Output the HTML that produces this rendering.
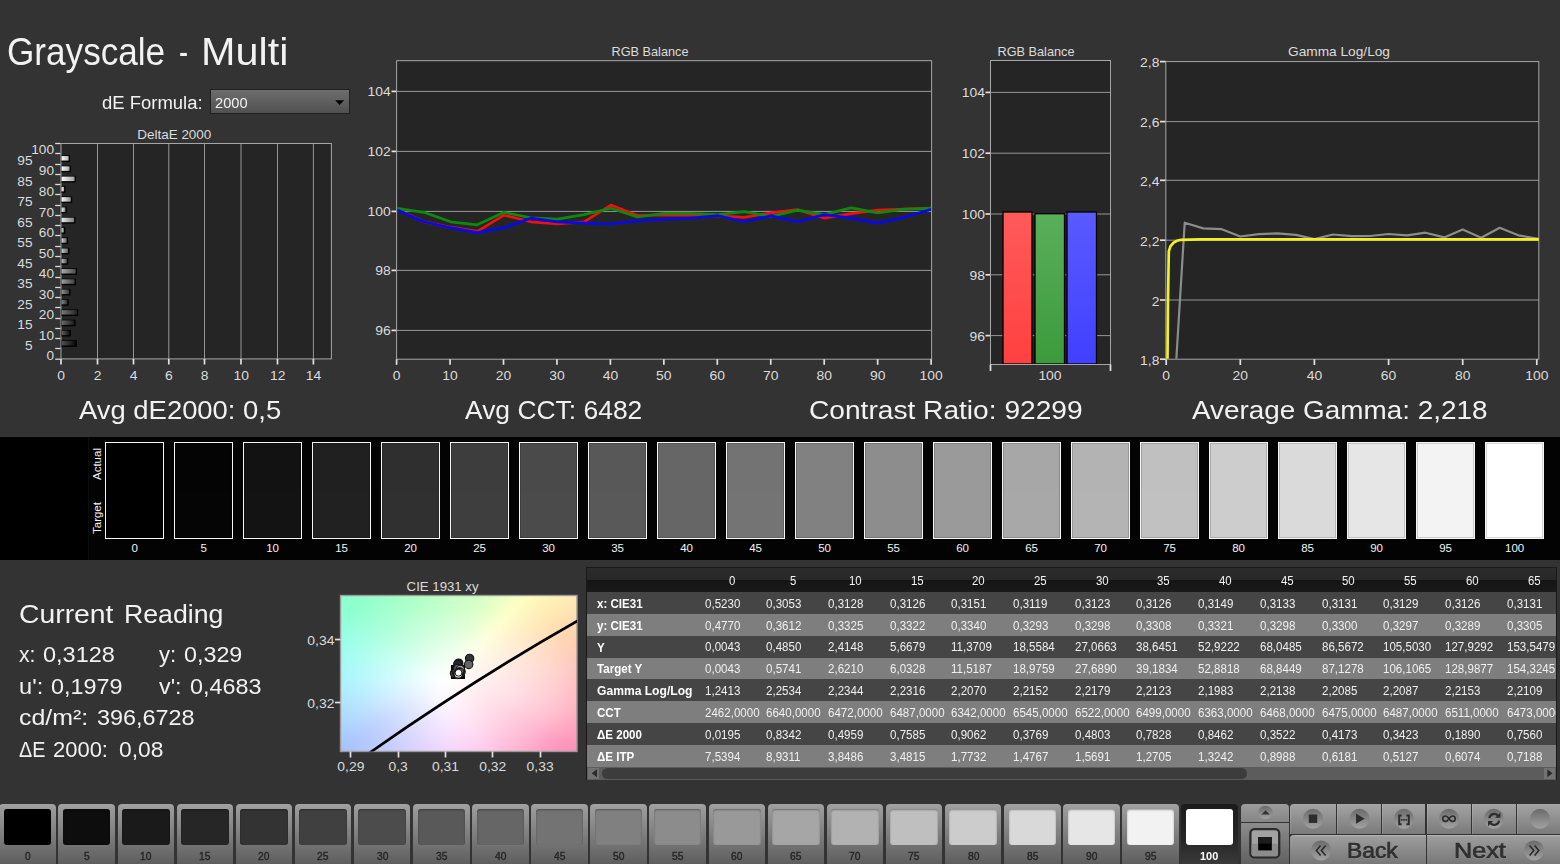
<!DOCTYPE html>
<html lang="en">
<head>
<meta charset="utf-8">
<title>Grayscale - Multi</title>
<style>
html,body{margin:0;padding:0;}
body{width:1560px;height:864px;overflow:hidden;background:#333333;position:relative;
 font-family:"Liberation Sans",sans-serif;}
.t{position:absolute;white-space:nowrap;line-height:1;transform-origin:0 0;display:block;}
.abs{position:absolute;}
svg{position:absolute;left:0;top:0;overflow:visible;}
svg text{font-family:"Liberation Sans",sans-serif;}
.row{position:absolute;left:587px;width:969px;}
.tab{position:absolute;top:804px;height:60px;width:56.5px;border-radius:4px 4px 0 0;
 background:linear-gradient(#a3a3a3 0,#9a9a9a 8%,#5e5e5e 100%);}
.tab i{position:absolute;left:4.5px;top:5px;width:47.5px;height:36px;border-radius:3px;display:block;}
.btn{position:absolute;background:linear-gradient(#9e9e9e,#6a6a6a);}
</style>
</head>
<body>

<div id="header">
<span class="t" style="left:6.90px;top:32.00px;font-size:39px;color:#f2f2f2;transform:scaleX(0.9009);">Grayscale</span> <span class="t" style="left:178.90px;top:32.00px;font-size:39px;color:#f2f2f2;transform:scaleX(0.6965);">-</span> <span class="t" style="left:201.20px;top:32.00px;font-size:39px;color:#f2f2f2;transform:scaleX(1.0609);">Multi</span>
<span class="t" style="left:102.00px;top:93.80px;font-size:18px;color:#f2f2f2;transform:scaleX(1.0261);">dE Formula:</span>
<div class="abs" style="left:210px;top:88.6px;width:137.6px;height:23px;border:1px solid #202020;background:linear-gradient(#6e6e6e,#505050);"></div>
<span class="t" style="left:214.80px;top:95.30px;font-size:15px;color:#f2f2f2;transform:scaleX(0.9769);">2000</span>
<svg width="1560" height="864"><path d="M335.2 100.2h8.900l-4.450 4.900z" fill="#000"/></svg>
</div>
<svg id="charts" width="1560" height="864" viewBox="0 0 1560 864">
<defs>
<clipPath id="cpRgb"><rect x="397" y="61" width="534.5" height="298.5"/></clipPath>
<clipPath id="cpGam"><rect x="1166" y="62" width="373" height="296.8"/></clipPath>
<clipPath id="cpCie"><rect x="340.5" y="595.5" width="236.5" height="156"/></clipPath>
<linearGradient id="gR" x1="0" y1="0" x2="0" y2="1"><stop offset="0" stop-color="#ff5a5a"/><stop offset="1" stop-color="#ff4040"/></linearGradient>
<linearGradient id="gG" x1="0" y1="0" x2="0" y2="1"><stop offset="0" stop-color="#5aaf5a"/><stop offset="1" stop-color="#3c9a3c"/></linearGradient>
<linearGradient id="gB" x1="0" y1="0" x2="0" y2="1"><stop offset="0" stop-color="#5a5aff"/><stop offset="1" stop-color="#4040ff"/></linearGradient>

<linearGradient id="gd0" x1="0" y1="0" x2="1" y2="0"><stop offset="0" stop-color="#464646"/><stop offset="1" stop-color="#000000"/></linearGradient>
<linearGradient id="gd5" x1="0" y1="0" x2="1" y2="0"><stop offset="0" stop-color="#535353"/><stop offset="1" stop-color="#090909"/></linearGradient>
<linearGradient id="gd10" x1="0" y1="0" x2="1" y2="0"><stop offset="0" stop-color="#606060"/><stop offset="1" stop-color="#131313"/></linearGradient>
<linearGradient id="gd15" x1="0" y1="0" x2="1" y2="0"><stop offset="0" stop-color="#6c6c6c"/><stop offset="1" stop-color="#1c1c1c"/></linearGradient>
<linearGradient id="gd20" x1="0" y1="0" x2="1" y2="0"><stop offset="0" stop-color="#797979"/><stop offset="1" stop-color="#262626"/></linearGradient>
<linearGradient id="gd25" x1="0" y1="0" x2="1" y2="0"><stop offset="0" stop-color="#868686"/><stop offset="1" stop-color="#303030"/></linearGradient>
<linearGradient id="gd30" x1="0" y1="0" x2="1" y2="0"><stop offset="0" stop-color="#929292"/><stop offset="1" stop-color="#393939"/></linearGradient>
<linearGradient id="gd35" x1="0" y1="0" x2="1" y2="0"><stop offset="0" stop-color="#9f9f9f"/><stop offset="1" stop-color="#424242"/></linearGradient>
<linearGradient id="gd40" x1="0" y1="0" x2="1" y2="0"><stop offset="0" stop-color="#acacac"/><stop offset="1" stop-color="#4c4c4c"/></linearGradient>
<linearGradient id="gd45" x1="0" y1="0" x2="1" y2="0"><stop offset="0" stop-color="#b9b9b9"/><stop offset="1" stop-color="#565656"/></linearGradient>
<linearGradient id="gd50" x1="0" y1="0" x2="1" y2="0"><stop offset="0" stop-color="#c6c6c6"/><stop offset="1" stop-color="#606060"/></linearGradient>
<linearGradient id="gd55" x1="0" y1="0" x2="1" y2="0"><stop offset="0" stop-color="#d2d2d2"/><stop offset="1" stop-color="#696969"/></linearGradient>
<linearGradient id="gd60" x1="0" y1="0" x2="1" y2="0"><stop offset="0" stop-color="#dfdfdf"/><stop offset="1" stop-color="#727272"/></linearGradient>
<linearGradient id="gd65" x1="0" y1="0" x2="1" y2="0"><stop offset="0" stop-color="#ececec"/><stop offset="1" stop-color="#7c7c7c"/></linearGradient>
<linearGradient id="gd70" x1="0" y1="0" x2="1" y2="0"><stop offset="0" stop-color="#f8f8f8"/><stop offset="1" stop-color="#858585"/></linearGradient>
<linearGradient id="gd75" x1="0" y1="0" x2="1" y2="0"><stop offset="0" stop-color="#ffffff"/><stop offset="1" stop-color="#8f8f8f"/></linearGradient>
<linearGradient id="gd80" x1="0" y1="0" x2="1" y2="0"><stop offset="0" stop-color="#ffffff"/><stop offset="1" stop-color="#999999"/></linearGradient>
<linearGradient id="gd85" x1="0" y1="0" x2="1" y2="0"><stop offset="0" stop-color="#ffffff"/><stop offset="1" stop-color="#a2a2a2"/></linearGradient>
<linearGradient id="gd90" x1="0" y1="0" x2="1" y2="0"><stop offset="0" stop-color="#ffffff"/><stop offset="1" stop-color="#acacac"/></linearGradient>
<linearGradient id="gd95" x1="0" y1="0" x2="1" y2="0"><stop offset="0" stop-color="#ffffff"/><stop offset="1" stop-color="#b5b5b5"/></linearGradient>
<linearGradient id="gd100" x1="0" y1="0" x2="1" y2="0"><stop offset="0" stop-color="#ffffff"/><stop offset="1" stop-color="#bfbfbf"/></linearGradient>
</defs>
<g id="deltaE">
<text x="174.30" y="138.90" font-size="13" text-anchor="middle" fill="#dcdcdc" textLength="74.00" lengthAdjust="spacingAndGlyphs">DeltaE 2000</text>
<rect x="61.0" y="143.5" width="270.4" height="215.39999999999998" fill="#252525"/>
<line x1="97.5" y1="143.5" x2="97.5" y2="358.9" stroke="#969696" stroke-width="1"/>
<line x1="133.5" y1="143.5" x2="133.5" y2="358.9" stroke="#969696" stroke-width="1"/>
<line x1="168.8" y1="143.5" x2="168.8" y2="358.9" stroke="#969696" stroke-width="1"/>
<line x1="204.5" y1="143.5" x2="204.5" y2="358.9" stroke="#969696" stroke-width="1"/>
<line x1="241.0" y1="143.5" x2="241.0" y2="358.9" stroke="#969696" stroke-width="1"/>
<line x1="277.5" y1="143.5" x2="277.5" y2="358.9" stroke="#969696" stroke-width="1"/>
<line x1="313.4" y1="143.5" x2="313.4" y2="358.9" stroke="#969696" stroke-width="1"/>
<rect x="61.0" y="143.5" width="270.4" height="215.39999999999998" fill="none" stroke="#a6a6a6" stroke-width="1"/>
<line x1="55.2" y1="143.5" x2="60.5" y2="143.5" stroke="#dcdcdc" stroke-width="1.3"/>
<text x="54.00" y="154.10" font-size="13" text-anchor="end" fill="#dcdcdc" textLength="22.78" lengthAdjust="spacingAndGlyphs">100</text>
<line x1="55.2" y1="153.5" x2="60.5" y2="153.5" stroke="#dcdcdc" stroke-width="1.3"/>
<text x="32.50" y="165.17" font-size="13" text-anchor="end" fill="#dcdcdc" textLength="15.18" lengthAdjust="spacingAndGlyphs">95</text>
<rect x="61.5" y="155.37" width="8.50" height="6.6" fill="#000"/>
<rect x="61.5" y="156.07" width="7.10" height="4.5" fill="url(#gd95)"/>
<line x1="55.2" y1="164.5" x2="60.5" y2="164.5" stroke="#dcdcdc" stroke-width="1.3"/>
<text x="54.00" y="175.44" font-size="13" text-anchor="end" fill="#dcdcdc" textLength="15.18" lengthAdjust="spacingAndGlyphs">90</text>
<rect x="61.5" y="165.64" width="9.40" height="6.6" fill="#000"/>
<rect x="61.5" y="166.34" width="8.00" height="4.5" fill="url(#gd90)"/>
<line x1="55.2" y1="174.5" x2="60.5" y2="174.5" stroke="#dcdcdc" stroke-width="1.3"/>
<text x="32.50" y="185.71" font-size="13" text-anchor="end" fill="#dcdcdc" textLength="15.18" lengthAdjust="spacingAndGlyphs">85</text>
<rect x="61.5" y="175.91" width="14.44" height="6.6" fill="#000"/>
<rect x="61.5" y="176.61" width="13.04" height="4.5" fill="url(#gd85)"/>
<line x1="55.2" y1="184.5" x2="60.5" y2="184.5" stroke="#dcdcdc" stroke-width="1.3"/>
<text x="54.00" y="195.98" font-size="13" text-anchor="end" fill="#dcdcdc" textLength="15.18" lengthAdjust="spacingAndGlyphs">80</text>
<rect x="61.5" y="186.18" width="4.00" height="6.6" fill="#000"/>
<rect x="61.5" y="186.88" width="2.60" height="4.5" fill="url(#gd80)"/>
<line x1="55.2" y1="194.5" x2="60.5" y2="194.5" stroke="#dcdcdc" stroke-width="1.3"/>
<text x="32.50" y="206.25" font-size="13" text-anchor="end" fill="#dcdcdc" textLength="15.18" lengthAdjust="spacingAndGlyphs">75</text>
<rect x="61.5" y="196.45" width="10.66" height="6.6" fill="#000"/>
<rect x="61.5" y="197.15" width="9.26" height="4.5" fill="url(#gd75)"/>
<line x1="55.2" y1="205.5" x2="60.5" y2="205.5" stroke="#dcdcdc" stroke-width="1.3"/>
<text x="54.00" y="216.52" font-size="13" text-anchor="end" fill="#dcdcdc" textLength="15.18" lengthAdjust="spacingAndGlyphs">70</text>
<rect x="61.5" y="206.72" width="5.26" height="6.6" fill="#000"/>
<rect x="61.5" y="207.42" width="3.86" height="4.5" fill="url(#gd70)"/>
<line x1="55.2" y1="215.5" x2="60.5" y2="215.5" stroke="#dcdcdc" stroke-width="1.3"/>
<text x="32.50" y="226.79" font-size="13" text-anchor="end" fill="#dcdcdc" textLength="15.18" lengthAdjust="spacingAndGlyphs">65</text>
<rect x="61.5" y="216.99" width="14.01" height="6.6" fill="#000"/>
<rect x="61.5" y="217.69" width="12.61" height="4.5" fill="url(#gd65)"/>
<line x1="55.2" y1="225.5" x2="60.5" y2="225.5" stroke="#dcdcdc" stroke-width="1.3"/>
<text x="54.00" y="237.06" font-size="13" text-anchor="end" fill="#dcdcdc" textLength="15.18" lengthAdjust="spacingAndGlyphs">60</text>
<rect x="61.5" y="227.26" width="3.80" height="6.6" fill="#000"/>
<rect x="61.5" y="227.96" width="2.40" height="4.5" fill="url(#gd60)"/>
<line x1="55.2" y1="235.5" x2="60.5" y2="235.5" stroke="#dcdcdc" stroke-width="1.3"/>
<text x="32.50" y="247.33" font-size="13" text-anchor="end" fill="#dcdcdc" textLength="15.18" lengthAdjust="spacingAndGlyphs">55</text>
<rect x="61.5" y="237.53" width="6.56" height="6.6" fill="#000"/>
<rect x="61.5" y="238.23" width="5.16" height="4.5" fill="url(#gd55)"/>
<line x1="55.2" y1="246.5" x2="60.5" y2="246.5" stroke="#dcdcdc" stroke-width="1.3"/>
<text x="54.00" y="257.60" font-size="13" text-anchor="end" fill="#dcdcdc" textLength="15.18" lengthAdjust="spacingAndGlyphs">50</text>
<rect x="61.5" y="247.80" width="7.91" height="6.6" fill="#000"/>
<rect x="61.5" y="248.50" width="6.51" height="4.5" fill="url(#gd50)"/>
<line x1="55.2" y1="256.5" x2="60.5" y2="256.5" stroke="#dcdcdc" stroke-width="1.3"/>
<text x="32.50" y="267.87" font-size="13" text-anchor="end" fill="#dcdcdc" textLength="15.18" lengthAdjust="spacingAndGlyphs">45</text>
<rect x="61.5" y="258.07" width="6.74" height="6.6" fill="#000"/>
<rect x="61.5" y="258.77" width="5.34" height="4.5" fill="url(#gd45)"/>
<line x1="55.2" y1="266.5" x2="60.5" y2="266.5" stroke="#dcdcdc" stroke-width="1.3"/>
<text x="54.00" y="278.14" font-size="13" text-anchor="end" fill="#dcdcdc" textLength="15.18" lengthAdjust="spacingAndGlyphs">40</text>
<rect x="61.5" y="268.34" width="15.63" height="6.6" fill="#000"/>
<rect x="61.5" y="269.04" width="14.23" height="4.5" fill="url(#gd40)"/>
<line x1="55.2" y1="277.5" x2="60.5" y2="277.5" stroke="#dcdcdc" stroke-width="1.3"/>
<text x="32.50" y="288.41" font-size="13" text-anchor="end" fill="#dcdcdc" textLength="15.18" lengthAdjust="spacingAndGlyphs">35</text>
<rect x="61.5" y="278.61" width="14.49" height="6.6" fill="#000"/>
<rect x="61.5" y="279.31" width="13.09" height="4.5" fill="url(#gd35)"/>
<line x1="55.2" y1="287.5" x2="60.5" y2="287.5" stroke="#dcdcdc" stroke-width="1.3"/>
<text x="54.00" y="298.68" font-size="13" text-anchor="end" fill="#dcdcdc" textLength="15.18" lengthAdjust="spacingAndGlyphs">30</text>
<rect x="61.5" y="288.88" width="9.05" height="6.6" fill="#000"/>
<rect x="61.5" y="289.58" width="7.65" height="4.5" fill="url(#gd30)"/>
<line x1="55.2" y1="297.5" x2="60.5" y2="297.5" stroke="#dcdcdc" stroke-width="1.3"/>
<text x="32.50" y="308.95" font-size="13" text-anchor="end" fill="#dcdcdc" textLength="15.18" lengthAdjust="spacingAndGlyphs">25</text>
<rect x="61.5" y="299.15" width="7.18" height="6.6" fill="#000"/>
<rect x="61.5" y="299.85" width="5.78" height="4.5" fill="url(#gd25)"/>
<line x1="55.2" y1="307.5" x2="60.5" y2="307.5" stroke="#dcdcdc" stroke-width="1.3"/>
<text x="54.00" y="319.22" font-size="13" text-anchor="end" fill="#dcdcdc" textLength="15.18" lengthAdjust="spacingAndGlyphs">20</text>
<rect x="61.5" y="309.42" width="16.71" height="6.6" fill="#000"/>
<rect x="61.5" y="310.12" width="15.31" height="4.5" fill="url(#gd20)"/>
<line x1="55.2" y1="318.5" x2="60.5" y2="318.5" stroke="#dcdcdc" stroke-width="1.3"/>
<text x="32.50" y="329.49" font-size="13" text-anchor="end" fill="#dcdcdc" textLength="15.18" lengthAdjust="spacingAndGlyphs">15</text>
<rect x="61.5" y="319.69" width="14.05" height="6.6" fill="#000"/>
<rect x="61.5" y="320.39" width="12.65" height="4.5" fill="url(#gd15)"/>
<line x1="55.2" y1="328.5" x2="60.5" y2="328.5" stroke="#dcdcdc" stroke-width="1.3"/>
<text x="54.00" y="339.76" font-size="13" text-anchor="end" fill="#dcdcdc" textLength="15.18" lengthAdjust="spacingAndGlyphs">10</text>
<rect x="61.5" y="329.96" width="9.33" height="6.6" fill="#000"/>
<rect x="61.5" y="330.66" width="7.93" height="4.5" fill="url(#gd10)"/>
<line x1="55.2" y1="338.5" x2="60.5" y2="338.5" stroke="#dcdcdc" stroke-width="1.3"/>
<text x="32.50" y="350.03" font-size="13" text-anchor="end" fill="#dcdcdc" textLength="7.59" lengthAdjust="spacingAndGlyphs">5</text>
<rect x="61.5" y="340.23" width="15.42" height="6.6" fill="#000"/>
<rect x="61.5" y="340.93" width="14.02" height="4.5" fill="url(#gd5)"/>
<line x1="55.2" y1="348.5" x2="60.5" y2="348.5" stroke="#dcdcdc" stroke-width="1.3"/>
<text x="54.00" y="360.30" font-size="13" text-anchor="end" fill="#dcdcdc" textLength="7.59" lengthAdjust="spacingAndGlyphs">0</text>
<line x1="55.2" y1="359.2" x2="60.5" y2="359.2" stroke="#dcdcdc" stroke-width="1.3"/>
<line x1="61.0" y1="358.9" x2="61.0" y2="364.5" stroke="#e2e2e2" stroke-width="1.7"/>
<text x="61.20" y="380.00" font-size="13" text-anchor="middle" fill="#dcdcdc" textLength="7.74" lengthAdjust="spacingAndGlyphs">0</text>
<line x1="97.5" y1="358.9" x2="97.5" y2="364.5" stroke="#e2e2e2" stroke-width="1.7"/>
<text x="97.70" y="380.00" font-size="13" text-anchor="middle" fill="#dcdcdc" textLength="7.74" lengthAdjust="spacingAndGlyphs">2</text>
<line x1="133.5" y1="358.9" x2="133.5" y2="364.5" stroke="#e2e2e2" stroke-width="1.7"/>
<text x="133.70" y="380.00" font-size="13" text-anchor="middle" fill="#dcdcdc" textLength="7.74" lengthAdjust="spacingAndGlyphs">4</text>
<line x1="168.8" y1="358.9" x2="168.8" y2="364.5" stroke="#e2e2e2" stroke-width="1.7"/>
<text x="169.00" y="380.00" font-size="13" text-anchor="middle" fill="#dcdcdc" textLength="7.74" lengthAdjust="spacingAndGlyphs">6</text>
<line x1="204.5" y1="358.9" x2="204.5" y2="364.5" stroke="#e2e2e2" stroke-width="1.7"/>
<text x="204.70" y="380.00" font-size="13" text-anchor="middle" fill="#dcdcdc" textLength="7.74" lengthAdjust="spacingAndGlyphs">8</text>
<line x1="241.0" y1="358.9" x2="241.0" y2="364.5" stroke="#e2e2e2" stroke-width="1.7"/>
<text x="241.20" y="380.00" font-size="13" text-anchor="middle" fill="#dcdcdc" textLength="15.47" lengthAdjust="spacingAndGlyphs">10</text>
<line x1="277.5" y1="358.9" x2="277.5" y2="364.5" stroke="#e2e2e2" stroke-width="1.7"/>
<text x="277.70" y="380.00" font-size="13" text-anchor="middle" fill="#dcdcdc" textLength="15.47" lengthAdjust="spacingAndGlyphs">12</text>
<line x1="313.4" y1="358.9" x2="313.4" y2="364.5" stroke="#e2e2e2" stroke-width="1.7"/>
<text x="313.60" y="380.00" font-size="13" text-anchor="middle" fill="#dcdcdc" textLength="15.47" lengthAdjust="spacingAndGlyphs">14</text>
</g>
<g id="rgbLine">
<text x="650.00" y="55.60" font-size="13" text-anchor="middle" fill="#dcdcdc" textLength="77.00" lengthAdjust="spacingAndGlyphs">RGB Balance</text>
<rect x="396.6" y="60.7" width="535.0" height="298.5" fill="#252525"/>
<line x1="396.6" y1="330.4" x2="931.6" y2="330.4" stroke="#969696" stroke-width="1"/>
<line x1="391.5" y1="330.4" x2="396.6" y2="330.4" stroke="#e2e2e2" stroke-width="1.7"/>
<text x="390.80" y="335.40" font-size="13" text-anchor="end" fill="#dcdcdc" textLength="15.47" lengthAdjust="spacingAndGlyphs">96</text>
<line x1="396.6" y1="270.4" x2="931.6" y2="270.4" stroke="#969696" stroke-width="1"/>
<line x1="391.5" y1="270.4" x2="396.6" y2="270.4" stroke="#e2e2e2" stroke-width="1.7"/>
<text x="390.80" y="275.40" font-size="13" text-anchor="end" fill="#dcdcdc" textLength="15.47" lengthAdjust="spacingAndGlyphs">98</text>
<line x1="396.6" y1="211.4" x2="931.6" y2="211.4" stroke="#969696" stroke-width="1"/>
<line x1="391.5" y1="211.4" x2="396.6" y2="211.4" stroke="#e2e2e2" stroke-width="1.7"/>
<text x="390.80" y="216.40" font-size="13" text-anchor="end" fill="#dcdcdc" textLength="23.21" lengthAdjust="spacingAndGlyphs">100</text>
<line x1="396.6" y1="151.4" x2="931.6" y2="151.4" stroke="#969696" stroke-width="1"/>
<line x1="391.5" y1="151.4" x2="396.6" y2="151.4" stroke="#e2e2e2" stroke-width="1.7"/>
<text x="390.80" y="156.40" font-size="13" text-anchor="end" fill="#dcdcdc" textLength="23.21" lengthAdjust="spacingAndGlyphs">102</text>
<line x1="396.6" y1="91.4" x2="931.6" y2="91.4" stroke="#969696" stroke-width="1"/>
<line x1="391.5" y1="91.4" x2="396.6" y2="91.4" stroke="#e2e2e2" stroke-width="1.7"/>
<text x="390.80" y="96.40" font-size="13" text-anchor="end" fill="#dcdcdc" textLength="23.21" lengthAdjust="spacingAndGlyphs">104</text>
<rect x="396.6" y="60.7" width="535.0" height="298.5" fill="none" stroke="#a6a6a6" stroke-width="1"/>
<line x1="396.60" y1="359.2" x2="396.60" y2="364.8" stroke="#e2e2e2" stroke-width="1.7"/>
<text x="396.60" y="380.00" font-size="13" text-anchor="middle" fill="#dcdcdc" textLength="7.74" lengthAdjust="spacingAndGlyphs">0</text>
<line x1="450.05" y1="359.2" x2="450.05" y2="364.8" stroke="#e2e2e2" stroke-width="1.7"/>
<text x="450.05" y="380.00" font-size="13" text-anchor="middle" fill="#dcdcdc" textLength="15.47" lengthAdjust="spacingAndGlyphs">10</text>
<line x1="503.50" y1="359.2" x2="503.50" y2="364.8" stroke="#e2e2e2" stroke-width="1.7"/>
<text x="503.50" y="380.00" font-size="13" text-anchor="middle" fill="#dcdcdc" textLength="15.47" lengthAdjust="spacingAndGlyphs">20</text>
<line x1="556.95" y1="359.2" x2="556.95" y2="364.8" stroke="#e2e2e2" stroke-width="1.7"/>
<text x="556.95" y="380.00" font-size="13" text-anchor="middle" fill="#dcdcdc" textLength="15.47" lengthAdjust="spacingAndGlyphs">30</text>
<line x1="610.40" y1="359.2" x2="610.40" y2="364.8" stroke="#e2e2e2" stroke-width="1.7"/>
<text x="610.40" y="380.00" font-size="13" text-anchor="middle" fill="#dcdcdc" textLength="15.47" lengthAdjust="spacingAndGlyphs">40</text>
<line x1="663.85" y1="359.2" x2="663.85" y2="364.8" stroke="#e2e2e2" stroke-width="1.7"/>
<text x="663.85" y="380.00" font-size="13" text-anchor="middle" fill="#dcdcdc" textLength="15.47" lengthAdjust="spacingAndGlyphs">50</text>
<line x1="717.30" y1="359.2" x2="717.30" y2="364.8" stroke="#e2e2e2" stroke-width="1.7"/>
<text x="717.30" y="380.00" font-size="13" text-anchor="middle" fill="#dcdcdc" textLength="15.47" lengthAdjust="spacingAndGlyphs">60</text>
<line x1="770.75" y1="359.2" x2="770.75" y2="364.8" stroke="#e2e2e2" stroke-width="1.7"/>
<text x="770.75" y="380.00" font-size="13" text-anchor="middle" fill="#dcdcdc" textLength="15.47" lengthAdjust="spacingAndGlyphs">70</text>
<line x1="824.20" y1="359.2" x2="824.20" y2="364.8" stroke="#e2e2e2" stroke-width="1.7"/>
<text x="824.20" y="380.00" font-size="13" text-anchor="middle" fill="#dcdcdc" textLength="15.47" lengthAdjust="spacingAndGlyphs">80</text>
<line x1="877.65" y1="359.2" x2="877.65" y2="364.8" stroke="#e2e2e2" stroke-width="1.7"/>
<text x="877.65" y="380.00" font-size="13" text-anchor="middle" fill="#dcdcdc" textLength="15.47" lengthAdjust="spacingAndGlyphs">90</text>
<line x1="931.10" y1="359.2" x2="931.10" y2="364.8" stroke="#e2e2e2" stroke-width="1.7"/>
<text x="931.10" y="380.00" font-size="13" text-anchor="middle" fill="#dcdcdc" textLength="23.21" lengthAdjust="spacingAndGlyphs">100</text>
<polyline points="397.2,209.2 423.9,221.8 450.6,227.2 477.3,231.3 504.0,215.2 530.7,221.8 557.4,224.0 584.1,221.8 610.8,205.1 637.5,215.5 664.2,214.8 690.9,215.2 717.6,215.9 744.3,217.3 771.0,212.8 797.7,209.6 824.4,218.2 851.1,213.7 877.8,210.1 904.5,209.2 931.2,208.0" fill="none" stroke="#f01010" stroke-width="2.7" stroke-linejoin="round" clip-path="url(#cpRgb)"/>
<polyline points="397.2,208.3 423.9,212.3 450.6,221.8 477.3,224.8 504.0,212.3 530.7,217.8 557.4,219.1 584.1,214.6 610.8,208.3 637.5,217.0 664.2,213.4 690.9,213.4 717.6,214.6 744.3,211.6 771.0,216.4 797.7,210.1 824.4,214.6 851.1,207.8 877.8,212.8 904.5,209.2 931.2,208.3" fill="none" stroke="#0c8a0c" stroke-width="2.7" stroke-linejoin="round" clip-path="url(#cpRgb)"/>
<polyline points="397.2,210.1 423.9,221.8 450.6,227.7 477.3,232.6 504.0,227.7 530.7,218.2 557.4,221.8 584.1,223.1 610.8,224.0 637.5,220.9 664.2,219.1 690.9,218.2 717.6,215.5 744.3,221.8 771.0,215.9 797.7,221.8 824.4,214.6 851.1,218.2 877.8,223.1 904.5,217.3 931.2,209.2" fill="none" stroke="#0808ee" stroke-width="2.7" stroke-linejoin="round" clip-path="url(#cpRgb)"/>
</g>
<g id="rgbBar">
<text x="1036.00" y="55.60" font-size="13" text-anchor="middle" fill="#dcdcdc" textLength="77.00" lengthAdjust="spacingAndGlyphs">RGB Balance</text>
<rect x="990.5" y="60.5" width="120.0" height="304.0" fill="#252525"/>
<line x1="990.5" y1="335.6" x2="1110.5" y2="335.6" stroke="#969696" stroke-width="1"/>
<line x1="985.5" y1="335.6" x2="990.5" y2="335.6" stroke="#e2e2e2" stroke-width="1.7"/>
<text x="985.00" y="340.60" font-size="13" text-anchor="end" fill="#dcdcdc" textLength="15.47" lengthAdjust="spacingAndGlyphs">96</text>
<line x1="990.5" y1="274.8" x2="1110.5" y2="274.8" stroke="#969696" stroke-width="1"/>
<line x1="985.5" y1="274.8" x2="990.5" y2="274.8" stroke="#e2e2e2" stroke-width="1.7"/>
<text x="985.00" y="279.80" font-size="13" text-anchor="end" fill="#dcdcdc" textLength="15.47" lengthAdjust="spacingAndGlyphs">98</text>
<line x1="990.5" y1="214.0" x2="1110.5" y2="214.0" stroke="#969696" stroke-width="1"/>
<line x1="985.5" y1="214.0" x2="990.5" y2="214.0" stroke="#e2e2e2" stroke-width="1.7"/>
<text x="985.00" y="219.00" font-size="13" text-anchor="end" fill="#dcdcdc" textLength="23.21" lengthAdjust="spacingAndGlyphs">100</text>
<line x1="990.5" y1="153.2" x2="1110.5" y2="153.2" stroke="#969696" stroke-width="1"/>
<line x1="985.5" y1="153.2" x2="990.5" y2="153.2" stroke="#e2e2e2" stroke-width="1.7"/>
<text x="985.00" y="158.20" font-size="13" text-anchor="end" fill="#dcdcdc" textLength="23.21" lengthAdjust="spacingAndGlyphs">102</text>
<line x1="990.5" y1="92.4" x2="1110.5" y2="92.4" stroke="#969696" stroke-width="1"/>
<line x1="985.5" y1="92.4" x2="990.5" y2="92.4" stroke="#e2e2e2" stroke-width="1.7"/>
<text x="985.00" y="97.40" font-size="13" text-anchor="end" fill="#dcdcdc" textLength="23.21" lengthAdjust="spacingAndGlyphs">104</text>
<rect x="990.5" y="60.5" width="120.0" height="304.0" fill="none" stroke="#a6a6a6" stroke-width="1"/>
<rect x="1003" y="212" width="29" height="152.0" fill="url(#gR)" stroke="#000" stroke-width="1.3"/>
<rect x="1035" y="213.7" width="29.5" height="150.3" fill="url(#gG)" stroke="#000" stroke-width="1.3"/>
<rect x="1067" y="212" width="29.5" height="152.0" fill="url(#gB)" stroke="#000" stroke-width="1.3"/>
<line x1="990.5" y1="364.5" x2="1110.5" y2="364.5" stroke="#a6a6a6" stroke-width="1"/>
<line x1="990.5" y1="364.5" x2="990.5" y2="371" stroke="#e2e2e2" stroke-width="1.7"/>
<line x1="1110.5" y1="364.5" x2="1110.5" y2="371" stroke="#e2e2e2" stroke-width="1.7"/>
<text x="1050.00" y="380.00" font-size="13" text-anchor="middle" fill="#dcdcdc" textLength="23.21" lengthAdjust="spacingAndGlyphs">100</text>
</g>
<g id="gamma">
<text x="1339.00" y="55.60" font-size="13" text-anchor="middle" fill="#dcdcdc" textLength="102.00" lengthAdjust="spacingAndGlyphs">Gamma Log/Log</text>
<rect x="1165.8" y="61.6" width="373.0" height="297.59999999999997" fill="#252525"/>
<line x1="1160" y1="359.2" x2="1165.8" y2="359.2" stroke="#e2e2e2" stroke-width="1.7"/>
<text x="1159.40" y="364.70" font-size="13" text-anchor="end" fill="#dcdcdc" textLength="19.34" lengthAdjust="spacingAndGlyphs">1,8</text>
<line x1="1165.8" y1="300.0" x2="1538.8" y2="300.0" stroke="#969696" stroke-width="1"/>
<line x1="1160" y1="300.0" x2="1165.8" y2="300.0" stroke="#e2e2e2" stroke-width="1.7"/>
<text x="1159.40" y="305.50" font-size="13" text-anchor="end" fill="#dcdcdc" textLength="7.74" lengthAdjust="spacingAndGlyphs">2</text>
<line x1="1165.8" y1="240.2" x2="1538.8" y2="240.2" stroke="#969696" stroke-width="1"/>
<line x1="1160" y1="240.2" x2="1165.8" y2="240.2" stroke="#e2e2e2" stroke-width="1.7"/>
<text x="1159.40" y="245.70" font-size="13" text-anchor="end" fill="#dcdcdc" textLength="19.34" lengthAdjust="spacingAndGlyphs">2,2</text>
<line x1="1165.8" y1="180.3" x2="1538.8" y2="180.3" stroke="#969696" stroke-width="1"/>
<line x1="1160" y1="180.3" x2="1165.8" y2="180.3" stroke="#e2e2e2" stroke-width="1.7"/>
<text x="1159.40" y="185.80" font-size="13" text-anchor="end" fill="#dcdcdc" textLength="19.34" lengthAdjust="spacingAndGlyphs">2,4</text>
<line x1="1165.8" y1="121.6" x2="1538.8" y2="121.6" stroke="#969696" stroke-width="1"/>
<line x1="1160" y1="121.6" x2="1165.8" y2="121.6" stroke="#e2e2e2" stroke-width="1.7"/>
<text x="1159.40" y="127.10" font-size="13" text-anchor="end" fill="#dcdcdc" textLength="19.34" lengthAdjust="spacingAndGlyphs">2,6</text>
<line x1="1160" y1="61.6" x2="1165.8" y2="61.6" stroke="#e2e2e2" stroke-width="1.7"/>
<text x="1159.40" y="67.10" font-size="13" text-anchor="end" fill="#dcdcdc" textLength="19.34" lengthAdjust="spacingAndGlyphs">2,8</text>
<rect x="1165.8" y="61.6" width="373.0" height="297.59999999999997" fill="none" stroke="#a6a6a6" stroke-width="1"/>
<line x1="1166.2" y1="359.2" x2="1166.2" y2="365" stroke="#e2e2e2" stroke-width="1.7"/>
<text x="1166.20" y="380.00" font-size="13" text-anchor="middle" fill="#dcdcdc" textLength="7.74" lengthAdjust="spacingAndGlyphs">0</text>
<line x1="1240.3" y1="359.2" x2="1240.3" y2="365" stroke="#e2e2e2" stroke-width="1.7"/>
<text x="1240.32" y="380.00" font-size="13" text-anchor="middle" fill="#dcdcdc" textLength="15.47" lengthAdjust="spacingAndGlyphs">20</text>
<line x1="1314.4" y1="359.2" x2="1314.4" y2="365" stroke="#e2e2e2" stroke-width="1.7"/>
<text x="1314.44" y="380.00" font-size="13" text-anchor="middle" fill="#dcdcdc" textLength="15.47" lengthAdjust="spacingAndGlyphs">40</text>
<line x1="1388.6" y1="359.2" x2="1388.6" y2="365" stroke="#e2e2e2" stroke-width="1.7"/>
<text x="1388.56" y="380.00" font-size="13" text-anchor="middle" fill="#dcdcdc" textLength="15.47" lengthAdjust="spacingAndGlyphs">60</text>
<line x1="1462.7" y1="359.2" x2="1462.7" y2="365" stroke="#e2e2e2" stroke-width="1.7"/>
<text x="1462.68" y="380.00" font-size="13" text-anchor="middle" fill="#dcdcdc" textLength="15.47" lengthAdjust="spacingAndGlyphs">80</text>
<line x1="1536.8" y1="359.2" x2="1536.8" y2="365" stroke="#e2e2e2" stroke-width="1.7"/>
<text x="1536.80" y="380.00" font-size="13" text-anchor="middle" fill="#dcdcdc" textLength="23.21" lengthAdjust="spacingAndGlyphs">100</text>
<polyline points="1166.2,523.8 1184.7,222.7 1203.3,228.4 1221.8,229.2 1240.3,236.5 1258.9,234.1 1277.4,233.3 1295.9,234.9 1314.4,239.1 1333.0,234.5 1351.5,236.1 1370.0,236.0 1388.6,234.0 1407.1,235.4 1425.6,232.7 1444.2,237.4 1462.7,229.6 1481.2,237.8 1499.7,227.8 1518.3,235.3 1538.8,238.8" fill="none" stroke="#8c8c8c" stroke-width="2.2" stroke-linejoin="round" clip-path="url(#cpGam)"/>
<polyline points="1167.3,380 1168.0,300 1168.8,251.4 1170.4,246.4 1173.6,242.6 1177,240.7 1181,239.8 1200,239.4 1538.8,239.3" fill="none" stroke="#f2f21e" stroke-width="2.7" stroke-linejoin="round" clip-path="url(#cpGam)"/>
</g>
<g id="cie">
<text x="442.60" y="591.00" font-size="13" text-anchor="middle" fill="#dcdcdc" textLength="72.00" lengthAdjust="spacingAndGlyphs">CIE 1931 xy</text>
<rect x="340.5" y="595.5" width="236.5" height="156.0" fill="none" stroke="#9a9a9a" stroke-width="1.4"/>
<path d="M362.8 757.5 L370 752.5 Q476.3 678.3 577 621.2 L590 613.9" fill="none" stroke="#000" stroke-width="2.7" clip-path="url(#cpCie)"/>
<line x1="335" y1="639.5" x2="340.5" y2="639.5" stroke="#e2e2e2" stroke-width="1.7"/>
<text x="334.40" y="644.50" font-size="13" text-anchor="end" fill="#dcdcdc" textLength="27.07" lengthAdjust="spacingAndGlyphs">0,34</text>
<line x1="335" y1="702.5" x2="340.5" y2="702.5" stroke="#e2e2e2" stroke-width="1.7"/>
<text x="334.40" y="707.50" font-size="13" text-anchor="end" fill="#dcdcdc" textLength="27.07" lengthAdjust="spacingAndGlyphs">0,32</text>
<line x1="350.5" y1="751.5" x2="350.5" y2="757.5" stroke="#e2e2e2" stroke-width="1.7"/>
<text x="350.90" y="771.20" font-size="13" text-anchor="middle" fill="#dcdcdc" textLength="27.07" lengthAdjust="spacingAndGlyphs">0,29</text>
<line x1="398.5" y1="751.5" x2="398.5" y2="757.5" stroke="#e2e2e2" stroke-width="1.7"/>
<text x="398.20" y="771.20" font-size="13" text-anchor="middle" fill="#dcdcdc" textLength="19.34" lengthAdjust="spacingAndGlyphs">0,3</text>
<line x1="445.5" y1="751.5" x2="445.5" y2="757.5" stroke="#e2e2e2" stroke-width="1.7"/>
<text x="445.50" y="771.20" font-size="13" text-anchor="middle" fill="#dcdcdc" textLength="27.07" lengthAdjust="spacingAndGlyphs">0,31</text>
<line x1="492.5" y1="751.5" x2="492.5" y2="757.5" stroke="#e2e2e2" stroke-width="1.7"/>
<text x="492.80" y="771.20" font-size="13" text-anchor="middle" fill="#dcdcdc" textLength="27.07" lengthAdjust="spacingAndGlyphs">0,32</text>
<line x1="540.5" y1="751.5" x2="540.5" y2="757.5" stroke="#e2e2e2" stroke-width="1.7"/>
<text x="540.10" y="771.20" font-size="13" text-anchor="middle" fill="#dcdcdc" textLength="27.07" lengthAdjust="spacingAndGlyphs">0,33</text>
<g clip-path="url(#cpCie)">
<rect x="452.2" y="666.2" width="11.5" height="11.5" fill="none" stroke="#000" stroke-width="2.5"/>
<circle cx="458.7" cy="663.2" r="4.2" fill="#1a1a1a" stroke="#141414" stroke-width="1.1"/>
<circle cx="457.8" cy="664.1" r="4.2" fill="#262626" stroke="#141414" stroke-width="1.1"/>
<circle cx="469.6" cy="658.4" r="4.2" fill="#333333" stroke="#141414" stroke-width="1.1"/>
<circle cx="454.5" cy="673.3" r="4.2" fill="#404040" stroke="#141414" stroke-width="1.1"/>
<circle cx="456.4" cy="671.7" r="4.2" fill="#4c4c4c" stroke="#141414" stroke-width="1.1"/>
<circle cx="457.8" cy="668.5" r="4.2" fill="#595959" stroke="#141414" stroke-width="1.1"/>
<circle cx="468.7" cy="664.4" r="4.2" fill="#666666" stroke="#141414" stroke-width="1.1"/>
<circle cx="461.1" cy="671.7" r="4.2" fill="#737373" stroke="#141414" stroke-width="1.1"/>
<circle cx="460.2" cy="671.0" r="4.2" fill="#808080" stroke="#141414" stroke-width="1.1"/>
<circle cx="459.2" cy="672.0" r="4.2" fill="#8c8c8c" stroke="#141414" stroke-width="1.1"/>
<circle cx="457.8" cy="674.5" r="4.2" fill="#999999" stroke="#141414" stroke-width="1.1"/>
<circle cx="460.2" cy="669.5" r="4.2" fill="#a6a6a6" stroke="#141414" stroke-width="1.1"/>
<circle cx="459.2" cy="672.3" r="4.2" fill="#b2b2b2" stroke="#141414" stroke-width="1.1"/>
<circle cx="458.3" cy="673.3" r="4.2" fill="#bfbfbf" stroke="#141414" stroke-width="1.1"/>
<circle cx="459.7" cy="672.0" r="4.2" fill="#cccccc" stroke="#141414" stroke-width="1.1"/>
<circle cx="457.8" cy="673.6" r="4.2" fill="#d9d9d9" stroke="#141414" stroke-width="1.1"/>
<circle cx="459.2" cy="672.6" r="4.2" fill="#e6e6e6" stroke="#141414" stroke-width="1.1"/>
<circle cx="458.3" cy="673.9" r="4.2" fill="#f2f2f2" stroke="#141414" stroke-width="1.1"/>
<circle cx="458.5" cy="672.8" r="3.4" fill="#fff" stroke="#111" stroke-width="1"/>
</g>
</g>
</svg>
<div id="cieBg" class="abs" style="left:341px;top:596px;width:236px;height:155.5px;z-index:-1;overflow:hidden;background:#fff;"><div class="abs" style="left:-30px;top:-30px;width:296px;height:215.5px;filter:blur(5px);background:radial-gradient(ellipse 95px 70px at 205px 128px,rgba(255,255,255,.42) 0,rgba(255,255,255,.3) 45%,rgba(255,255,255,0) 100%),radial-gradient(ellipse 132px 104px at 134px 115.5px,rgba(255,255,255,1) 0,rgba(255,255,255,.92) 12%,rgba(255,255,255,.6) 38%,rgba(255,255,255,.26) 68%,rgba(255,255,255,0) 100%),conic-gradient(from 0deg at 134px 115.5px,#b4ffbe 0deg,#d4ffbc 26deg,#ffffc0 43deg,#ffe6b2 59deg,#ffcab0 76deg,#ffb2b4 90deg,#ff8eb6 118deg,#ffa0c8 134deg,#ffb8ea 151deg,#f0c6ff 180deg,#ccc2ff 205deg,#a6c0ff 236deg,#a4d4ff 250deg,#98f2ff 270deg,#8effe6 291deg,#8cffce 309deg,#9effbe 335deg,#b4ffbe 360deg);"></div></div>
<div id="stats">
<span class="t" style="left:79.20px;top:396.70px;font-size:26px;color:#f2f2f2;transform:scaleX(1.0543);">Avg dE2000: 0,5</span>
<span class="t" style="left:465.20px;top:396.70px;font-size:26px;color:#f2f2f2;transform:scaleX(1.0166);">Avg CCT: 6482</span>
<span class="t" style="left:809.40px;top:396.70px;font-size:26px;color:#f2f2f2;transform:scaleX(1.0817);">Contrast Ratio: 92299</span>
<span class="t" style="left:1191.50px;top:396.70px;font-size:26px;color:#f2f2f2;transform:scaleX(1.0723);">Average Gamma: 2,218</span>
</div>
<div id="strip" class="abs" style="left:0;top:437px;width:1560px;height:123px;background:#000;">
<div class="abs" style="left:88px;top:0;width:1472px;height:123px;background:#030303;border-left:1px solid #0c0c0c;"></div>
<div class="abs" style="left:105.00px;top:5px;width:57px;height:95px;border:1px solid #f6f6f6;box-shadow:inset 0 0 0 1px rgba(0,0,0,.16);background:linear-gradient(#000000 50%,#000000 50%);"></div>
<span class="t" style="left:131.40px;top:106.25px;font-size:11.5px;color:#f4f4f4;">0</span>
<div class="abs" style="left:174.00px;top:5px;width:57px;height:95px;border:1px solid #f6f6f6;box-shadow:inset 0 0 0 1px rgba(0,0,0,.16);background:linear-gradient(#040404 50%,#050505 50%);"></div>
<span class="t" style="left:200.40px;top:106.25px;font-size:11.5px;color:#f4f4f4;">5</span>
<div class="abs" style="left:243.00px;top:5px;width:57px;height:95px;border:1px solid #f6f6f6;box-shadow:inset 0 0 0 1px rgba(0,0,0,.16);background:linear-gradient(#121212 50%,#131313 50%);"></div>
<span class="t" style="left:266.20px;top:106.25px;font-size:11.5px;color:#f4f4f4;">10</span>
<div class="abs" style="left:312.00px;top:5px;width:57px;height:95px;border:1px solid #f6f6f6;box-shadow:inset 0 0 0 1px rgba(0,0,0,.16);background:linear-gradient(#202020 50%,#212121 50%);"></div>
<span class="t" style="left:335.20px;top:106.25px;font-size:11.5px;color:#f4f4f4;">15</span>
<div class="abs" style="left:381.00px;top:5px;width:57px;height:95px;border:1px solid #f6f6f6;box-shadow:inset 0 0 0 1px rgba(0,0,0,.16);background:linear-gradient(#2f2f2f 50%,#303030 50%);"></div>
<span class="t" style="left:404.20px;top:106.25px;font-size:11.5px;color:#f4f4f4;">20</span>
<div class="abs" style="left:450.00px;top:5px;width:57px;height:95px;border:1px solid #f6f6f6;box-shadow:inset 0 0 0 1px rgba(0,0,0,.16);background:linear-gradient(#3d3d3d 50%,#3e3e3e 50%);"></div>
<span class="t" style="left:473.20px;top:106.25px;font-size:11.5px;color:#f4f4f4;">25</span>
<div class="abs" style="left:519.00px;top:5px;width:57px;height:95px;border:1px solid #f6f6f6;box-shadow:inset 0 0 0 1px rgba(0,0,0,.16);background:linear-gradient(#4a4a4a 50%,#4b4b4b 50%);"></div>
<span class="t" style="left:542.20px;top:106.25px;font-size:11.5px;color:#f4f4f4;">30</span>
<div class="abs" style="left:588.00px;top:5px;width:57px;height:95px;border:1px solid #f6f6f6;box-shadow:inset 0 0 0 1px rgba(0,0,0,.16);background:linear-gradient(#585858 50%,#595959 50%);"></div>
<span class="t" style="left:611.20px;top:106.25px;font-size:11.5px;color:#f4f4f4;">35</span>
<div class="abs" style="left:657.00px;top:5px;width:57px;height:95px;border:1px solid #f6f6f6;box-shadow:inset 0 0 0 1px rgba(0,0,0,.16);background:linear-gradient(#666666 50%,#666666 50%);"></div>
<span class="t" style="left:680.20px;top:106.25px;font-size:11.5px;color:#f4f4f4;">40</span>
<div class="abs" style="left:726.00px;top:5px;width:57px;height:95px;border:1px solid #f6f6f6;box-shadow:inset 0 0 0 1px rgba(0,0,0,.16);background:linear-gradient(#737373 50%,#747474 50%);"></div>
<span class="t" style="left:749.20px;top:106.25px;font-size:11.5px;color:#f4f4f4;">45</span>
<div class="abs" style="left:795.00px;top:5px;width:57px;height:95px;border:1px solid #f6f6f6;box-shadow:inset 0 0 0 1px rgba(0,0,0,.16);background:linear-gradient(#818181 50%,#818181 50%);"></div>
<span class="t" style="left:818.20px;top:106.25px;font-size:11.5px;color:#f4f4f4;">50</span>
<div class="abs" style="left:864.00px;top:5px;width:57px;height:95px;border:1px solid #f6f6f6;box-shadow:inset 0 0 0 1px rgba(0,0,0,.16);background:linear-gradient(#8d8d8d 50%,#8d8d8d 50%);"></div>
<span class="t" style="left:887.20px;top:106.25px;font-size:11.5px;color:#f4f4f4;">55</span>
<div class="abs" style="left:933.00px;top:5px;width:57px;height:95px;border:1px solid #f6f6f6;box-shadow:inset 0 0 0 1px rgba(0,0,0,.16);background:linear-gradient(#9a9a9a 50%,#9a9a9a 50%);"></div>
<span class="t" style="left:956.20px;top:106.25px;font-size:11.5px;color:#f4f4f4;">60</span>
<div class="abs" style="left:1002.00px;top:5px;width:57px;height:95px;border:1px solid #f6f6f6;box-shadow:inset 0 0 0 1px rgba(0,0,0,.16);background:linear-gradient(#a7a7a7 50%,#a8a8a8 50%);"></div>
<span class="t" style="left:1025.20px;top:106.25px;font-size:11.5px;color:#f4f4f4;">65</span>
<div class="abs" style="left:1071.00px;top:5px;width:57px;height:95px;border:1px solid #f6f6f6;box-shadow:inset 0 0 0 1px rgba(0,0,0,.16);background:linear-gradient(#b3b3b3 50%,#b4b4b4 50%);"></div>
<span class="t" style="left:1094.20px;top:106.25px;font-size:11.5px;color:#f4f4f4;">70</span>
<div class="abs" style="left:1140.00px;top:5px;width:57px;height:95px;border:1px solid #f6f6f6;box-shadow:inset 0 0 0 1px rgba(0,0,0,.16);background:linear-gradient(#c0c0c0 50%,#c1c1c1 50%);"></div>
<span class="t" style="left:1163.20px;top:106.25px;font-size:11.5px;color:#f4f4f4;">75</span>
<div class="abs" style="left:1209.00px;top:5px;width:57px;height:95px;border:1px solid #f6f6f6;box-shadow:inset 0 0 0 1px rgba(0,0,0,.16);background:linear-gradient(#cdcdcd 50%,#cdcdcd 50%);"></div>
<span class="t" style="left:1232.20px;top:106.25px;font-size:11.5px;color:#f4f4f4;">80</span>
<div class="abs" style="left:1278.00px;top:5px;width:57px;height:95px;border:1px solid #f6f6f6;box-shadow:inset 0 0 0 1px rgba(0,0,0,.16);background:linear-gradient(#dadada 50%,#dadada 50%);"></div>
<span class="t" style="left:1301.20px;top:106.25px;font-size:11.5px;color:#f4f4f4;">85</span>
<div class="abs" style="left:1347.00px;top:5px;width:57px;height:95px;border:1px solid #f6f6f6;box-shadow:inset 0 0 0 1px rgba(0,0,0,.16);background:linear-gradient(#e6e6e6 50%,#e6e6e6 50%);"></div>
<span class="t" style="left:1370.20px;top:106.25px;font-size:11.5px;color:#f4f4f4;">90</span>
<div class="abs" style="left:1416.00px;top:5px;width:57px;height:95px;border:1px solid #f6f6f6;box-shadow:inset 0 0 0 1px rgba(0,0,0,.16);background:linear-gradient(#f3f3f3 50%,#f3f3f3 50%);"></div>
<span class="t" style="left:1439.20px;top:106.25px;font-size:11.5px;color:#f4f4f4;">95</span>
<div class="abs" style="left:1485.00px;top:5px;width:57px;height:95px;border:1px solid #f6f6f6;box-shadow:inset 0 0 0 1px rgba(0,0,0,.16);background:linear-gradient(#ffffff 50%,#ffffff 50%);"></div>
<span class="t" style="left:1505.01px;top:106.25px;font-size:11.5px;color:#f4f4f4;">100</span>
<span class="t" style="left:91.5px;top:43px;font-size:11.5px;color:#f4f4f4;transform:rotate(-90deg);transform-origin:0 0;">Actual</span>
<span class="t" style="left:91.5px;top:96.5px;font-size:11.5px;color:#f4f4f4;transform:rotate(-90deg);transform-origin:0 0;">Target</span>
</div>
<div id="reading">
<span class="t" style="left:19.40px;top:600.60px;font-size:26px;color:#f2f2f2;transform:scaleX(1.0898);">Current</span> <span class="t" style="left:124.30px;top:600.60px;font-size:26px;color:#f2f2f2;transform:scaleX(1.0263);">Reading</span>
<span class="t" style="left:18.70px;top:644.85px;font-size:21.5px;color:#f2f2f2;transform:scaleX(0.9839);">x:</span> <span class="t" style="left:42.90px;top:644.85px;font-size:21.5px;color:#f2f2f2;transform:scaleX(1.0929);">0,3128</span>
<span class="t" style="left:158.80px;top:644.85px;font-size:21.5px;color:#f2f2f2;transform:scaleX(1.0256);">y:</span> <span class="t" style="left:183.60px;top:644.85px;font-size:21.5px;color:#f2f2f2;transform:scaleX(1.0843);">0,329</span>
<span class="t" style="left:18.70px;top:677.25px;font-size:21.5px;color:#f2f2f2;transform:scaleX(1.0981);">u':</span> <span class="t" style="left:51.00px;top:677.25px;font-size:21.5px;color:#f2f2f2;transform:scaleX(1.0868);">0,1979</span>
<span class="t" style="left:158.80px;top:677.25px;font-size:21.5px;color:#f2f2f2;transform:scaleX(1.0837);">v':</span> <span class="t" style="left:189.60px;top:677.25px;font-size:21.5px;color:#f2f2f2;transform:scaleX(1.0853);">0,4683</span>
<span class="t" style="left:18.70px;top:707.85px;font-size:21.5px;color:#f2f2f2;transform:scaleX(1.1594);">cd/m²:</span> <span class="t" style="left:96.80px;top:707.85px;font-size:21.5px;color:#f2f2f2;transform:scaleX(1.0886);">396,6728</span>
<span class="t" style="left:18.70px;top:740.25px;font-size:21.5px;color:#f2f2f2;transform:scaleX(0.9198);">ΔE</span> <span class="t" style="left:52.80px;top:740.25px;font-size:21.5px;color:#f2f2f2;transform:scaleX(1.0212);">2000:</span> <span class="t" style="left:118.80px;top:740.25px;font-size:21.5px;color:#f2f2f2;transform:scaleX(1.0618);">0,08</span>
</div>
<div id="table">
<div class="abs" style="left:586px;top:567px;width:971px;height:213px;background:#1a1a1a;"></div>
<div class="abs" style="left:587px;top:568px;width:969px;height:24px;background:linear-gradient(#2c2c2c 0,#282828 48%,#151515 52%,#1a1a1a 100%);"></div>
<div class="abs" style="left:587px;top:568px;width:969px;height:212px;overflow:hidden;">
<span class="t" style="left:141.73px;top:7.00px;font-size:12px;color:#f4f4f4;transform:scaleX(0.9500);">0</span>
<span class="t" style="left:203.42px;top:7.00px;font-size:12px;color:#f4f4f4;transform:scaleX(0.9500);">5</span>
<span class="t" style="left:261.94px;top:7.00px;font-size:12px;color:#f4f4f4;transform:scaleX(0.9500);">10</span>
<span class="t" style="left:323.63px;top:7.00px;font-size:12px;color:#f4f4f4;transform:scaleX(0.9500);">15</span>
<span class="t" style="left:385.32px;top:7.00px;font-size:12px;color:#f4f4f4;transform:scaleX(0.9500);">20</span>
<span class="t" style="left:447.01px;top:7.00px;font-size:12px;color:#f4f4f4;transform:scaleX(0.9500);">25</span>
<span class="t" style="left:508.70px;top:7.00px;font-size:12px;color:#f4f4f4;transform:scaleX(0.9500);">30</span>
<span class="t" style="left:570.39px;top:7.00px;font-size:12px;color:#f4f4f4;transform:scaleX(0.9500);">35</span>
<span class="t" style="left:632.08px;top:7.00px;font-size:12px;color:#f4f4f4;transform:scaleX(0.9500);">40</span>
<span class="t" style="left:693.77px;top:7.00px;font-size:12px;color:#f4f4f4;transform:scaleX(0.9500);">45</span>
<span class="t" style="left:755.46px;top:7.00px;font-size:12px;color:#f4f4f4;transform:scaleX(0.9500);">50</span>
<span class="t" style="left:817.15px;top:7.00px;font-size:12px;color:#f4f4f4;transform:scaleX(0.9500);">55</span>
<span class="t" style="left:878.84px;top:7.00px;font-size:12px;color:#f4f4f4;transform:scaleX(0.9500);">60</span>
<span class="t" style="left:940.53px;top:7.00px;font-size:12px;color:#f4f4f4;transform:scaleX(0.9500);">65</span>
<div class="abs" style="left:0;top:24.00px;width:969px;height:22.14px;background:#454545;"></div>
<span class="t" style="left:9.80px;top:29.87px;font-size:12.5px;color:#ffffff;font-weight:bold;transform:scaleX(0.9250);">x: CIE31</span>
<span class="t" style="left:117.60px;top:29.72px;font-size:12px;color:#f0f0f0;transform:scaleX(0.9620);">0,5230</span>
<span class="t" style="left:179.29px;top:29.72px;font-size:12px;color:#f0f0f0;transform:scaleX(0.9620);">0,3053</span>
<span class="t" style="left:240.98px;top:29.72px;font-size:12px;color:#f0f0f0;transform:scaleX(0.9620);">0,3128</span>
<span class="t" style="left:302.67px;top:29.72px;font-size:12px;color:#f0f0f0;transform:scaleX(0.9620);">0,3126</span>
<span class="t" style="left:364.36px;top:29.72px;font-size:12px;color:#f0f0f0;transform:scaleX(0.9620);">0,3151</span>
<span class="t" style="left:426.05px;top:29.72px;font-size:12px;color:#f0f0f0;transform:scaleX(0.9620);">0,3119</span>
<span class="t" style="left:487.74px;top:29.72px;font-size:12px;color:#f0f0f0;transform:scaleX(0.9620);">0,3123</span>
<span class="t" style="left:549.43px;top:29.72px;font-size:12px;color:#f0f0f0;transform:scaleX(0.9620);">0,3126</span>
<span class="t" style="left:611.12px;top:29.72px;font-size:12px;color:#f0f0f0;transform:scaleX(0.9620);">0,3149</span>
<span class="t" style="left:672.81px;top:29.72px;font-size:12px;color:#f0f0f0;transform:scaleX(0.9620);">0,3133</span>
<span class="t" style="left:734.50px;top:29.72px;font-size:12px;color:#f0f0f0;transform:scaleX(0.9620);">0,3131</span>
<span class="t" style="left:796.19px;top:29.72px;font-size:12px;color:#f0f0f0;transform:scaleX(0.9620);">0,3129</span>
<span class="t" style="left:857.88px;top:29.72px;font-size:12px;color:#f0f0f0;transform:scaleX(0.9620);">0,3126</span>
<span class="t" style="left:919.57px;top:29.72px;font-size:12px;color:#f0f0f0;transform:scaleX(0.9620);">0,3131</span>
<div class="abs" style="left:0;top:45.84px;width:969px;height:22.14px;background:#7e7e7e;"></div>
<span class="t" style="left:9.80px;top:51.71px;font-size:12.5px;color:#ffffff;font-weight:bold;transform:scaleX(0.9250);">y: CIE31</span>
<span class="t" style="left:117.60px;top:51.56px;font-size:12px;color:#f0f0f0;transform:scaleX(0.9620);">0,4770</span>
<span class="t" style="left:179.29px;top:51.56px;font-size:12px;color:#f0f0f0;transform:scaleX(0.9620);">0,3612</span>
<span class="t" style="left:240.98px;top:51.56px;font-size:12px;color:#f0f0f0;transform:scaleX(0.9620);">0,3325</span>
<span class="t" style="left:302.67px;top:51.56px;font-size:12px;color:#f0f0f0;transform:scaleX(0.9620);">0,3322</span>
<span class="t" style="left:364.36px;top:51.56px;font-size:12px;color:#f0f0f0;transform:scaleX(0.9620);">0,3340</span>
<span class="t" style="left:426.05px;top:51.56px;font-size:12px;color:#f0f0f0;transform:scaleX(0.9620);">0,3293</span>
<span class="t" style="left:487.74px;top:51.56px;font-size:12px;color:#f0f0f0;transform:scaleX(0.9620);">0,3298</span>
<span class="t" style="left:549.43px;top:51.56px;font-size:12px;color:#f0f0f0;transform:scaleX(0.9620);">0,3308</span>
<span class="t" style="left:611.12px;top:51.56px;font-size:12px;color:#f0f0f0;transform:scaleX(0.9620);">0,3321</span>
<span class="t" style="left:672.81px;top:51.56px;font-size:12px;color:#f0f0f0;transform:scaleX(0.9620);">0,3298</span>
<span class="t" style="left:734.50px;top:51.56px;font-size:12px;color:#f0f0f0;transform:scaleX(0.9620);">0,3300</span>
<span class="t" style="left:796.19px;top:51.56px;font-size:12px;color:#f0f0f0;transform:scaleX(0.9620);">0,3297</span>
<span class="t" style="left:857.88px;top:51.56px;font-size:12px;color:#f0f0f0;transform:scaleX(0.9620);">0,3289</span>
<span class="t" style="left:919.57px;top:51.56px;font-size:12px;color:#f0f0f0;transform:scaleX(0.9620);">0,3305</span>
<div class="abs" style="left:0;top:67.68px;width:969px;height:22.14px;background:#454545;"></div>
<span class="t" style="left:9.80px;top:73.55px;font-size:12.5px;color:#ffffff;font-weight:bold;transform:scaleX(0.9250);">Y</span>
<span class="t" style="left:117.60px;top:73.40px;font-size:12px;color:#f0f0f0;transform:scaleX(0.9620);">0,0043</span>
<span class="t" style="left:179.29px;top:73.40px;font-size:12px;color:#f0f0f0;transform:scaleX(0.9620);">0,4850</span>
<span class="t" style="left:240.98px;top:73.40px;font-size:12px;color:#f0f0f0;transform:scaleX(0.9620);">2,4148</span>
<span class="t" style="left:302.67px;top:73.40px;font-size:12px;color:#f0f0f0;transform:scaleX(0.9620);">5,6679</span>
<span class="t" style="left:364.36px;top:73.40px;font-size:12px;color:#f0f0f0;transform:scaleX(0.9620);">11,3709</span>
<span class="t" style="left:426.05px;top:73.40px;font-size:12px;color:#f0f0f0;transform:scaleX(0.9620);">18,5584</span>
<span class="t" style="left:487.74px;top:73.40px;font-size:12px;color:#f0f0f0;transform:scaleX(0.9620);">27,0663</span>
<span class="t" style="left:549.43px;top:73.40px;font-size:12px;color:#f0f0f0;transform:scaleX(0.9620);">38,6451</span>
<span class="t" style="left:611.12px;top:73.40px;font-size:12px;color:#f0f0f0;transform:scaleX(0.9620);">52,9222</span>
<span class="t" style="left:672.81px;top:73.40px;font-size:12px;color:#f0f0f0;transform:scaleX(0.9620);">68,0485</span>
<span class="t" style="left:734.50px;top:73.40px;font-size:12px;color:#f0f0f0;transform:scaleX(0.9620);">86,5672</span>
<span class="t" style="left:796.19px;top:73.40px;font-size:12px;color:#f0f0f0;transform:scaleX(0.9620);">105,5030</span>
<span class="t" style="left:857.88px;top:73.40px;font-size:12px;color:#f0f0f0;transform:scaleX(0.9620);">127,9292</span>
<span class="t" style="left:919.57px;top:73.40px;font-size:12px;color:#f0f0f0;transform:scaleX(0.9620);">153,5479</span>
<div class="abs" style="left:0;top:89.52px;width:969px;height:22.14px;background:#7e7e7e;"></div>
<span class="t" style="left:9.80px;top:95.39px;font-size:12.5px;color:#ffffff;font-weight:bold;transform:scaleX(0.9250);">Target Y</span>
<span class="t" style="left:117.60px;top:95.24px;font-size:12px;color:#f0f0f0;transform:scaleX(0.9620);">0,0043</span>
<span class="t" style="left:179.29px;top:95.24px;font-size:12px;color:#f0f0f0;transform:scaleX(0.9620);">0,5741</span>
<span class="t" style="left:240.98px;top:95.24px;font-size:12px;color:#f0f0f0;transform:scaleX(0.9620);">2,6210</span>
<span class="t" style="left:302.67px;top:95.24px;font-size:12px;color:#f0f0f0;transform:scaleX(0.9620);">6,0328</span>
<span class="t" style="left:364.36px;top:95.24px;font-size:12px;color:#f0f0f0;transform:scaleX(0.9620);">11,5187</span>
<span class="t" style="left:426.05px;top:95.24px;font-size:12px;color:#f0f0f0;transform:scaleX(0.9620);">18,9759</span>
<span class="t" style="left:487.74px;top:95.24px;font-size:12px;color:#f0f0f0;transform:scaleX(0.9620);">27,6890</span>
<span class="t" style="left:549.43px;top:95.24px;font-size:12px;color:#f0f0f0;transform:scaleX(0.9620);">39,1834</span>
<span class="t" style="left:611.12px;top:95.24px;font-size:12px;color:#f0f0f0;transform:scaleX(0.9620);">52,8818</span>
<span class="t" style="left:672.81px;top:95.24px;font-size:12px;color:#f0f0f0;transform:scaleX(0.9620);">68,8449</span>
<span class="t" style="left:734.50px;top:95.24px;font-size:12px;color:#f0f0f0;transform:scaleX(0.9620);">87,1278</span>
<span class="t" style="left:796.19px;top:95.24px;font-size:12px;color:#f0f0f0;transform:scaleX(0.9620);">106,1065</span>
<span class="t" style="left:857.88px;top:95.24px;font-size:12px;color:#f0f0f0;transform:scaleX(0.9620);">128,9877</span>
<span class="t" style="left:919.57px;top:95.24px;font-size:12px;color:#f0f0f0;transform:scaleX(0.9620);">154,3245</span>
<div class="abs" style="left:0;top:111.36px;width:969px;height:22.14px;background:#454545;"></div>
<span class="t" style="left:9.80px;top:117.23px;font-size:12.5px;color:#ffffff;font-weight:bold;transform:scaleX(0.9674);">Gamma Log/Log</span>
<span class="t" style="left:117.60px;top:117.08px;font-size:12px;color:#f0f0f0;transform:scaleX(0.9620);">1,2413</span>
<span class="t" style="left:179.29px;top:117.08px;font-size:12px;color:#f0f0f0;transform:scaleX(0.9620);">2,2534</span>
<span class="t" style="left:240.98px;top:117.08px;font-size:12px;color:#f0f0f0;transform:scaleX(0.9620);">2,2344</span>
<span class="t" style="left:302.67px;top:117.08px;font-size:12px;color:#f0f0f0;transform:scaleX(0.9620);">2,2316</span>
<span class="t" style="left:364.36px;top:117.08px;font-size:12px;color:#f0f0f0;transform:scaleX(0.9620);">2,2070</span>
<span class="t" style="left:426.05px;top:117.08px;font-size:12px;color:#f0f0f0;transform:scaleX(0.9620);">2,2152</span>
<span class="t" style="left:487.74px;top:117.08px;font-size:12px;color:#f0f0f0;transform:scaleX(0.9620);">2,2179</span>
<span class="t" style="left:549.43px;top:117.08px;font-size:12px;color:#f0f0f0;transform:scaleX(0.9620);">2,2123</span>
<span class="t" style="left:611.12px;top:117.08px;font-size:12px;color:#f0f0f0;transform:scaleX(0.9620);">2,1983</span>
<span class="t" style="left:672.81px;top:117.08px;font-size:12px;color:#f0f0f0;transform:scaleX(0.9620);">2,2138</span>
<span class="t" style="left:734.50px;top:117.08px;font-size:12px;color:#f0f0f0;transform:scaleX(0.9620);">2,2085</span>
<span class="t" style="left:796.19px;top:117.08px;font-size:12px;color:#f0f0f0;transform:scaleX(0.9620);">2,2087</span>
<span class="t" style="left:857.88px;top:117.08px;font-size:12px;color:#f0f0f0;transform:scaleX(0.9620);">2,2153</span>
<span class="t" style="left:919.57px;top:117.08px;font-size:12px;color:#f0f0f0;transform:scaleX(0.9620);">2,2109</span>
<div class="abs" style="left:0;top:133.20px;width:969px;height:22.14px;background:#7e7e7e;"></div>
<span class="t" style="left:9.80px;top:139.07px;font-size:12.5px;color:#ffffff;font-weight:bold;transform:scaleX(0.9250);">CCT</span>
<span class="t" style="left:117.60px;top:138.92px;font-size:12px;color:#f0f0f0;transform:scaleX(0.9620);">2462,0000</span>
<span class="t" style="left:179.29px;top:138.92px;font-size:12px;color:#f0f0f0;transform:scaleX(0.9620);">6640,0000</span>
<span class="t" style="left:240.98px;top:138.92px;font-size:12px;color:#f0f0f0;transform:scaleX(0.9620);">6472,0000</span>
<span class="t" style="left:302.67px;top:138.92px;font-size:12px;color:#f0f0f0;transform:scaleX(0.9620);">6487,0000</span>
<span class="t" style="left:364.36px;top:138.92px;font-size:12px;color:#f0f0f0;transform:scaleX(0.9620);">6342,0000</span>
<span class="t" style="left:426.05px;top:138.92px;font-size:12px;color:#f0f0f0;transform:scaleX(0.9620);">6545,0000</span>
<span class="t" style="left:487.74px;top:138.92px;font-size:12px;color:#f0f0f0;transform:scaleX(0.9620);">6522,0000</span>
<span class="t" style="left:549.43px;top:138.92px;font-size:12px;color:#f0f0f0;transform:scaleX(0.9620);">6499,0000</span>
<span class="t" style="left:611.12px;top:138.92px;font-size:12px;color:#f0f0f0;transform:scaleX(0.9620);">6363,0000</span>
<span class="t" style="left:672.81px;top:138.92px;font-size:12px;color:#f0f0f0;transform:scaleX(0.9620);">6468,0000</span>
<span class="t" style="left:734.50px;top:138.92px;font-size:12px;color:#f0f0f0;transform:scaleX(0.9620);">6475,0000</span>
<span class="t" style="left:796.19px;top:138.92px;font-size:12px;color:#f0f0f0;transform:scaleX(0.9620);">6487,0000</span>
<span class="t" style="left:857.88px;top:138.92px;font-size:12px;color:#f0f0f0;transform:scaleX(0.9620);">6511,0000</span>
<span class="t" style="left:919.57px;top:138.92px;font-size:12px;color:#f0f0f0;transform:scaleX(0.9620);">6473,0000</span>
<div class="abs" style="left:0;top:155.04px;width:969px;height:22.14px;background:#454545;"></div>
<span class="t" style="left:9.80px;top:160.91px;font-size:12.5px;color:#ffffff;font-weight:bold;transform:scaleX(0.9250);">ΔE 2000</span>
<span class="t" style="left:117.60px;top:160.76px;font-size:12px;color:#f0f0f0;transform:scaleX(0.9620);">0,0195</span>
<span class="t" style="left:179.29px;top:160.76px;font-size:12px;color:#f0f0f0;transform:scaleX(0.9620);">0,8342</span>
<span class="t" style="left:240.98px;top:160.76px;font-size:12px;color:#f0f0f0;transform:scaleX(0.9620);">0,4959</span>
<span class="t" style="left:302.67px;top:160.76px;font-size:12px;color:#f0f0f0;transform:scaleX(0.9620);">0,7585</span>
<span class="t" style="left:364.36px;top:160.76px;font-size:12px;color:#f0f0f0;transform:scaleX(0.9620);">0,9062</span>
<span class="t" style="left:426.05px;top:160.76px;font-size:12px;color:#f0f0f0;transform:scaleX(0.9620);">0,3769</span>
<span class="t" style="left:487.74px;top:160.76px;font-size:12px;color:#f0f0f0;transform:scaleX(0.9620);">0,4803</span>
<span class="t" style="left:549.43px;top:160.76px;font-size:12px;color:#f0f0f0;transform:scaleX(0.9620);">0,7828</span>
<span class="t" style="left:611.12px;top:160.76px;font-size:12px;color:#f0f0f0;transform:scaleX(0.9620);">0,8462</span>
<span class="t" style="left:672.81px;top:160.76px;font-size:12px;color:#f0f0f0;transform:scaleX(0.9620);">0,3522</span>
<span class="t" style="left:734.50px;top:160.76px;font-size:12px;color:#f0f0f0;transform:scaleX(0.9620);">0,4173</span>
<span class="t" style="left:796.19px;top:160.76px;font-size:12px;color:#f0f0f0;transform:scaleX(0.9620);">0,3423</span>
<span class="t" style="left:857.88px;top:160.76px;font-size:12px;color:#f0f0f0;transform:scaleX(0.9620);">0,1890</span>
<span class="t" style="left:919.57px;top:160.76px;font-size:12px;color:#f0f0f0;transform:scaleX(0.9620);">0,7560</span>
<div class="abs" style="left:0;top:176.88px;width:969px;height:22.14px;background:#7e7e7e;"></div>
<span class="t" style="left:9.80px;top:182.75px;font-size:12.5px;color:#ffffff;font-weight:bold;transform:scaleX(0.9250);">ΔE ITP</span>
<span class="t" style="left:117.60px;top:182.60px;font-size:12px;color:#f0f0f0;transform:scaleX(0.9620);">7,5394</span>
<span class="t" style="left:179.29px;top:182.60px;font-size:12px;color:#f0f0f0;transform:scaleX(0.9620);">8,9311</span>
<span class="t" style="left:240.98px;top:182.60px;font-size:12px;color:#f0f0f0;transform:scaleX(0.9620);">3,8486</span>
<span class="t" style="left:302.67px;top:182.60px;font-size:12px;color:#f0f0f0;transform:scaleX(0.9620);">3,4815</span>
<span class="t" style="left:364.36px;top:182.60px;font-size:12px;color:#f0f0f0;transform:scaleX(0.9620);">1,7732</span>
<span class="t" style="left:426.05px;top:182.60px;font-size:12px;color:#f0f0f0;transform:scaleX(0.9620);">1,4767</span>
<span class="t" style="left:487.74px;top:182.60px;font-size:12px;color:#f0f0f0;transform:scaleX(0.9620);">1,5691</span>
<span class="t" style="left:549.43px;top:182.60px;font-size:12px;color:#f0f0f0;transform:scaleX(0.9620);">1,2705</span>
<span class="t" style="left:611.12px;top:182.60px;font-size:12px;color:#f0f0f0;transform:scaleX(0.9620);">1,3242</span>
<span class="t" style="left:672.81px;top:182.60px;font-size:12px;color:#f0f0f0;transform:scaleX(0.9620);">0,8988</span>
<span class="t" style="left:734.50px;top:182.60px;font-size:12px;color:#f0f0f0;transform:scaleX(0.9620);">0,6181</span>
<span class="t" style="left:796.19px;top:182.60px;font-size:12px;color:#f0f0f0;transform:scaleX(0.9620);">0,5127</span>
<span class="t" style="left:857.88px;top:182.60px;font-size:12px;color:#f0f0f0;transform:scaleX(0.9620);">0,6074</span>
<span class="t" style="left:919.57px;top:182.60px;font-size:12px;color:#f0f0f0;transform:scaleX(0.9620);">0,7188</span>
</div>
<div class="abs" style="left:587px;top:766.6px;width:969px;height:13.4px;background:#5c5c5c;"></div>
<div class="abs" style="left:602px;top:767.6px;width:645.3px;height:11.4px;border-radius:6px;background:#3c3c3c;"></div>
<div class="abs" style="left:588px;top:767.6px;width:11.2px;height:11.4px;background:#727272;"></div>
<div class="abs" style="left:1544.2px;top:767.6px;width:11.2px;height:11.4px;background:#727272;"></div>
<svg width="1560" height="864"><path d="M597 769.3v8l-5.2-4z" fill="#2a2a2a"/><path d="M1547.300 769.300v8l5.200-4z" fill="#2a2a2a"/></svg>
</div>
<div id="bottombar">
<div class="tab" style="left:-0.70px;"><i style="background:#000000;box-shadow:inset 0 1px 2px rgba(0,0,0,.35);"></i></div>
<span class="t" style="left:24.76px;top:850.80px;font-size:11px;color:#262626;transform:scaleX(0.9300);-webkit-text-stroke:0.4px #262626;">0</span>
<div class="tab" style="left:58.40px;"><i style="background:#0d0d0d;box-shadow:inset 0 1px 2px rgba(0,0,0,.35);"></i></div>
<span class="t" style="left:83.86px;top:850.80px;font-size:11px;color:#262626;transform:scaleX(0.9300);-webkit-text-stroke:0.4px #262626;">5</span>
<div class="tab" style="left:117.50px;"><i style="background:#1a1a1a;box-shadow:inset 0 1px 2px rgba(0,0,0,.35);"></i></div>
<span class="t" style="left:140.11px;top:850.80px;font-size:11px;color:#262626;transform:scaleX(0.9300);-webkit-text-stroke:0.4px #262626;">10</span>
<div class="tab" style="left:176.60px;"><i style="background:#262626;box-shadow:inset 0 1px 2px rgba(0,0,0,.35);"></i></div>
<span class="t" style="left:199.21px;top:850.80px;font-size:11px;color:#262626;transform:scaleX(0.9300);-webkit-text-stroke:0.4px #262626;">15</span>
<div class="tab" style="left:235.70px;"><i style="background:#333333;box-shadow:inset 0 1px 2px rgba(0,0,0,.35);"></i></div>
<span class="t" style="left:258.31px;top:850.80px;font-size:11px;color:#262626;transform:scaleX(0.9300);-webkit-text-stroke:0.4px #262626;">20</span>
<div class="tab" style="left:294.80px;"><i style="background:#404040;box-shadow:inset 0 1px 2px rgba(0,0,0,.35);"></i></div>
<span class="t" style="left:317.41px;top:850.80px;font-size:11px;color:#262626;transform:scaleX(0.9300);-webkit-text-stroke:0.4px #262626;">25</span>
<div class="tab" style="left:353.90px;"><i style="background:#4c4c4c;box-shadow:inset 0 1px 2px rgba(0,0,0,.35);"></i></div>
<span class="t" style="left:376.51px;top:850.80px;font-size:11px;color:#262626;transform:scaleX(0.9300);-webkit-text-stroke:0.4px #262626;">30</span>
<div class="tab" style="left:413.00px;"><i style="background:#595959;box-shadow:inset 0 1px 2px rgba(0,0,0,.35);"></i></div>
<span class="t" style="left:435.61px;top:850.80px;font-size:11px;color:#262626;transform:scaleX(0.9300);-webkit-text-stroke:0.4px #262626;">35</span>
<div class="tab" style="left:472.10px;"><i style="background:#666666;box-shadow:inset 0 1px 2px rgba(0,0,0,.35);"></i></div>
<span class="t" style="left:494.71px;top:850.80px;font-size:11px;color:#262626;transform:scaleX(0.9300);-webkit-text-stroke:0.4px #262626;">40</span>
<div class="tab" style="left:531.20px;"><i style="background:#737373;box-shadow:inset 0 1px 2px rgba(0,0,0,.35);"></i></div>
<span class="t" style="left:553.81px;top:850.80px;font-size:11px;color:#262626;transform:scaleX(0.9300);-webkit-text-stroke:0.4px #262626;">45</span>
<div class="tab" style="left:590.30px;"><i style="background:#808080;box-shadow:inset 0 1px 2px rgba(0,0,0,.35);"></i></div>
<span class="t" style="left:612.91px;top:850.80px;font-size:11px;color:#262626;transform:scaleX(0.9300);-webkit-text-stroke:0.4px #262626;">50</span>
<div class="tab" style="left:649.40px;"><i style="background:#8c8c8c;box-shadow:inset 0 1px 2px rgba(0,0,0,.35);"></i></div>
<span class="t" style="left:672.01px;top:850.80px;font-size:11px;color:#262626;transform:scaleX(0.9300);-webkit-text-stroke:0.4px #262626;">55</span>
<div class="tab" style="left:708.50px;"><i style="background:#999999;box-shadow:inset 0 1px 2px rgba(0,0,0,.35);"></i></div>
<span class="t" style="left:731.11px;top:850.80px;font-size:11px;color:#262626;transform:scaleX(0.9300);-webkit-text-stroke:0.4px #262626;">60</span>
<div class="tab" style="left:767.60px;"><i style="background:#a6a6a6;box-shadow:inset 0 1px 2px rgba(0,0,0,.35);"></i></div>
<span class="t" style="left:790.21px;top:850.80px;font-size:11px;color:#262626;transform:scaleX(0.9300);-webkit-text-stroke:0.4px #262626;">65</span>
<div class="tab" style="left:826.70px;"><i style="background:#b2b2b2;box-shadow:inset 0 1px 2px rgba(0,0,0,.35);"></i></div>
<span class="t" style="left:849.31px;top:850.80px;font-size:11px;color:#262626;transform:scaleX(0.9300);-webkit-text-stroke:0.4px #262626;">70</span>
<div class="tab" style="left:885.80px;"><i style="background:#bfbfbf;box-shadow:inset 0 1px 2px rgba(0,0,0,.35);"></i></div>
<span class="t" style="left:908.41px;top:850.80px;font-size:11px;color:#262626;transform:scaleX(0.9300);-webkit-text-stroke:0.4px #262626;">75</span>
<div class="tab" style="left:944.90px;"><i style="background:#cccccc;box-shadow:inset 0 1px 2px rgba(0,0,0,.35);"></i></div>
<span class="t" style="left:967.51px;top:850.80px;font-size:11px;color:#262626;transform:scaleX(0.9300);-webkit-text-stroke:0.4px #262626;">80</span>
<div class="tab" style="left:1004.00px;"><i style="background:#d9d9d9;box-shadow:inset 0 1px 2px rgba(0,0,0,.35);"></i></div>
<span class="t" style="left:1026.61px;top:850.80px;font-size:11px;color:#262626;transform:scaleX(0.9300);-webkit-text-stroke:0.4px #262626;">85</span>
<div class="tab" style="left:1063.10px;"><i style="background:#e6e6e6;box-shadow:inset 0 1px 2px rgba(0,0,0,.35);"></i></div>
<span class="t" style="left:1085.71px;top:850.80px;font-size:11px;color:#262626;transform:scaleX(0.9300);-webkit-text-stroke:0.4px #262626;">90</span>
<div class="tab" style="left:1122.20px;"><i style="background:#f2f2f2;box-shadow:inset 0 1px 2px rgba(0,0,0,.35);"></i></div>
<span class="t" style="left:1144.81px;top:850.80px;font-size:11px;color:#262626;transform:scaleX(0.9300);-webkit-text-stroke:0.4px #262626;">95</span>
<div class="tab" style="left:1181.30px;background:linear-gradient(#1b1b1b,#262626 60%,#3a3a3a);"><i style="background:#fff;"></i></div>
<span class="t" style="left:1200.49px;top:850.55px;font-size:11.5px;color:#ffffff;font-weight:bold;transform:scaleX(0.9500);">100</span>
<div class="btn" style="left:1241px;top:804px;width:48px;height:18px;border-radius:4px 4px 0 0;background:linear-gradient(#9c9c9c,#868686);"></div>
<div class="btn" style="left:1241px;top:823px;width:48px;height:41px;background:linear-gradient(#8c8c8c,#606060);"></div>
<div class="btn" style="left:1290.3px;top:803.8px;width:45.6px;height:30px;border-radius:4px 0 0 0;background:linear-gradient(#a4a4a4,#7a7a7a);box-shadow:inset 1px 0 0 rgba(255,255,255,.12);"></div>
<div class="btn" style="left:1336.9px;top:803.8px;width:44.1px;height:30px;background:linear-gradient(#a4a4a4,#7a7a7a);box-shadow:inset 1px 0 0 rgba(255,255,255,.12);"></div>
<div class="btn" style="left:1382.0px;top:803.8px;width:43.2px;height:30px;background:linear-gradient(#a4a4a4,#7a7a7a);box-shadow:inset 1px 0 0 rgba(255,255,255,.12);"></div>
<div class="btn" style="left:1426.8px;top:803.8px;width:44.3px;height:30px;background:linear-gradient(#a4a4a4,#7a7a7a);box-shadow:inset 1px 0 0 rgba(255,255,255,.12);"></div>
<div class="btn" style="left:1472.1px;top:803.8px;width:44.0px;height:30px;background:linear-gradient(#a4a4a4,#7a7a7a);box-shadow:inset 1px 0 0 rgba(255,255,255,.12);"></div>
<div class="btn" style="left:1517.1px;top:803.8px;width:44.4px;height:30px;background:linear-gradient(#a4a4a4,#7a7a7a);box-shadow:inset 1px 0 0 rgba(255,255,255,.12);"></div>
<div class="btn" style="left:1290.3px;top:835.0px;width:135.3px;height:29.2px;border-radius:4px 0 0 0;background:linear-gradient(#a2a2a2,#9a9a9a 12%,#787878);box-shadow:inset 0 1px 0 rgba(255,255,255,.18);"></div>
<div class="btn" style="left:1427.2px;top:835.0px;width:134px;height:29.2px;background:linear-gradient(#a2a2a2,#9a9a9a 12%,#787878);box-shadow:inset 0 1px 0 rgba(255,255,255,.18);"></div>
<span class="t" style="left:1347.40px;top:840.85px;font-size:21.5px;color:#303030;transform:scaleX(1.0628);-webkit-text-stroke:0.7px #303030;text-shadow:0 1px 0 rgba(255,255,255,.22);">Back</span>
<span class="t" style="left:1454.20px;top:840.85px;font-size:21.5px;color:#303030;transform:scaleX(1.1717);-webkit-text-stroke:0.7px #303030;text-shadow:0 1px 0 rgba(255,255,255,.22);">Next</span>
<svg width="1560" height="864" viewBox="0 0 1560 864">
<defs><linearGradient id="disc" x1="0" y1="0" x2="0" y2="1"><stop offset="0" stop-color="#6a6a6a"/><stop offset="1" stop-color="#a2a2a2"/></linearGradient></defs>
<ellipse cx="1265.4" cy="812.4" rx="7.2" ry="6.6" fill="url(#disc)"/><path d="M1261.4 814.600h8.400l-4.200-4.400z" fill="#363636"/>
<rect x="1250.4" y="829.2" width="28.8" height="28.2" rx="4" fill="#a2a2a2" stroke="#2a2a2a" stroke-width="2.3"/>
<rect x="1251.6" y="843.7" width="26.4" height="12.600" rx="2" fill="#8c8c8c"/>
<rect x="1258.2" y="837" width="13.6" height="13.4" fill="#000"/><rect x="1258.2" y="837" width="13.600" height="6.700" fill="#1c1c1c"/>
<circle cx="1313" cy="818.7" r="10" fill="url(#disc)"/>
<circle cx="1359.5" cy="818.7" r="10" fill="url(#disc)"/>
<circle cx="1403.9" cy="818.7" r="10" fill="url(#disc)"/>
<circle cx="1449" cy="818.7" r="10" fill="url(#disc)"/>
<circle cx="1493.8" cy="818.7" r="10" fill="url(#disc)"/>
<circle cx="1540" cy="818.7" r="10" fill="url(#disc)"/>
<rect x="1308.8" y="814.5" width="8.4" height="8.4" fill="#2c2c2c"/>
<path d="M1356 813.6v10.2l8.6-5.1z" fill="#2c2c2c"/>
<path d="M1401.6 815.6h-2.400v8.600h2.400M1406.400 815.600h2.400v8.600h-2.400" fill="none" stroke="#2c2c2c" stroke-width="2"/><path d="M1401 819.9h1.500M1403.250 819.900h1.500M1405.500 819.900h1.500" stroke="#2c2c2c" stroke-width="1.7"/>
<path d="M1449 818.7c-1.300-2-2.300-2.700-3.500-2.700a2.700 2.700 0 0 0 0 5.400c1.200 0 2.200-.7 3.500-2.700c1.300-2 2.300-2.700 3.500-2.700a2.700 2.700 0 0 1 0 5.400c-1.200 0-2.200-.7-3.500-2.700z" fill="none" stroke="#2c2c2c" stroke-width="1.6"/>
<path d="M1489.4 818.2a4.800 4.800 0 0 1 8.400-2.600M1499 820.600a4.800 4.800 0 0 1-8.400 2.600" fill="none" stroke="#2c2c2c" stroke-width="2.2"/><path d="M1500.4 812.6v5.200h-5.200zM1488 826.200v-5.200h5.200z" fill="#2c2c2c"/>
<circle cx="1321" cy="850.4" r="10" fill="url(#disc)"/><circle cx="1534" cy="850.4" r="10" fill="url(#disc)"/>
<path d="M1320.6 845.6l-4.200 4.900 4.200 4.900M1325.600 845.600l-4.200 4.900 4.200 4.900" fill="none" stroke="#2c2c2c" stroke-width="1.6"/>
<path d="M1529.6 845.6l4.200 4.900-4.200 4.900M1534.600 845.600l4.200 4.900-4.200 4.900" fill="none" stroke="#2c2c2c" stroke-width="1.6"/>
</svg>
</div>
</body>
</html>
